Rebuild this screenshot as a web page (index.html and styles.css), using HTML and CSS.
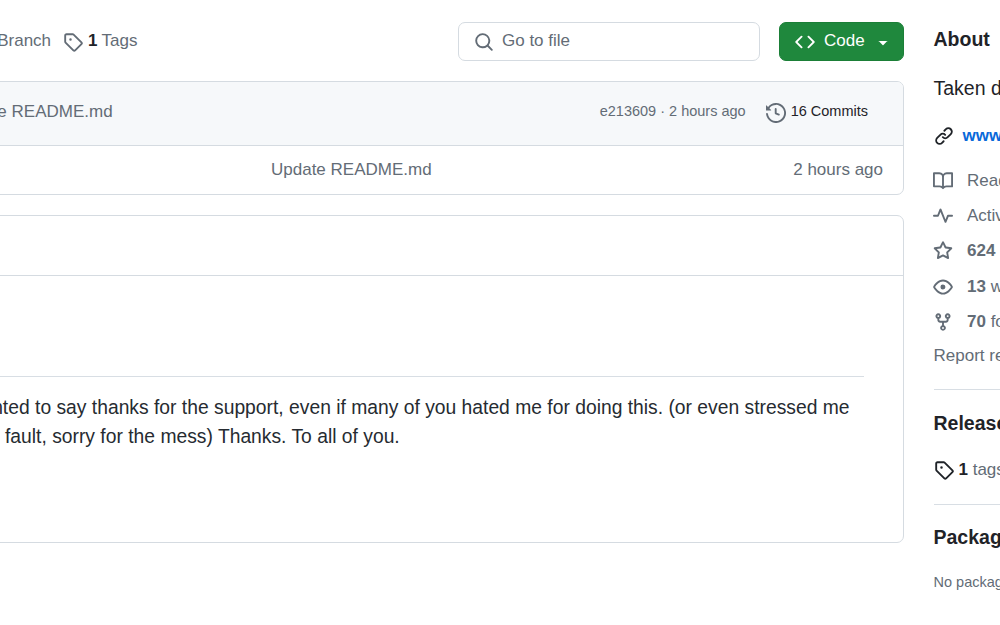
FILE: index.html
```html
<!DOCTYPE html>
<html lang="en">
<head>
<meta charset="utf-8">
<title>Repository</title>
<link rel="stylesheet" href="styles.css">
</head>
<body>
<div class="page">
  <main class="main">
    <div class="toolbar">
      <div class="refs">
        <a class="ref branch">1 Branch</a>
        <a class="ref tags">
          <svg class="icon" viewBox="0 0 16 16"><path d="M1 7.775V2.75C1 1.784 1.784 1 2.75 1h5.025c.464 0 .91.184 1.238.513l6.25 6.25a1.75 1.75 0 0 1 0 2.474l-5.026 5.026a1.75 1.75 0 0 1-2.474 0l-6.25-6.25A1.752 1.752 0 0 1 1 7.775Zm1.5 0c0 .066.026.13.073.177l6.25 6.25a.25.25 0 0 0 .354 0l5.025-5.025a.25.25 0 0 0 0-.354l-6.25-6.25a.25.25 0 0 0-.177-.073H2.75a.25.25 0 0 0-.25.25ZM6 5a1 1 0 1 1 0 2 1 1 0 0 1 0-2Z"/></svg>
          <b>1</b> Tags
        </a>
      </div>
      <div class="search">
        <svg class="icon" viewBox="0 0 16 16"><path d="M10.68 11.74a6 6 0 0 1-7.922-8.982 6 6 0 0 1 8.982 7.922l3.04 3.04a.749.749 0 0 1-.326 1.275.749.749 0 0 1-.734-.215ZM11.5 7a4.499 4.499 0 1 0-8.997 0A4.499 4.499 0 0 0 11.5 7Z"/></svg>
        <span class="lift">Go to file</span>
      </div>
      <button class="code">
        <svg class="icon" viewBox="0 0 16 16"><path d="m11.28 3.22 4.25 4.25a.75.75 0 0 1 0 1.06l-4.25 4.25a.749.749 0 0 1-1.275-.326.749.749 0 0 1 .215-.734L13.94 8l-3.72-3.72a.749.749 0 0 1 .326-1.275.749.749 0 0 1 .734.215Zm-6.56 0a.751.751 0 0 1 1.042.018.751.751 0 0 1 .018 1.042L2.06 8l3.72 3.72a.749.749 0 0 1-.326 1.275.749.749 0 0 1-.734-.215L.47 8.53a.75.75 0 0 1 0-1.06Z"/></svg>
        <span class="lift">Code</span>
        <svg class="icon caret" viewBox="0 0 16 16"><path d="m4.427 7.427 3.396 3.396a.25.25 0 0 0 .354 0l3.396-3.396A.25.25 0 0 0 11.896 7H4.104a.25.25 0 0 0-.177.427Z"/></svg>
      </button>
    </div>

    <section class="files">
      <div class="commit-head">
        <span class="commit-msg">Update README.md</span>
        <span class="commit-meta">e213609 · 2 hours ago</span>
        <a class="commits">
          <svg class="icon" viewBox="0 0 16 16"><path d="m.427 1.927 1.215 1.215a8.002 8.002 0 1 1-1.6 5.685.75.75 0 1 1 1.493-.154 6.5 6.5 0 1 0 1.18-4.458l1.358 1.358A.25.25 0 0 1 3.896 6H.25A.25.25 0 0 1 0 5.75V2.104a.25.25 0 0 1 .427-.177ZM7.75 4a.75.75 0 0 1 .75.75v2.992l2.028.812a.75.75 0 0 1-.557 1.392l-2.5-1A.751.751 0 0 1 7 8.25v-3.5A.75.75 0 0 1 7.75 4Z"/></svg>
          <span class="lift-more">16 Commits</span>
        </a>
      </div>
      <div class="file-row">
        <span class="file-msg">Update README.md</span>
        <span class="file-age">2 hours ago</span>
      </div>
    </section>

    <section class="readme">
      <div class="readme-head"></div>
      <div class="readme-body">
        <hr class="rule">
        <p class="line first">wanted to say thanks for the support, even if many of you hated me for doing this. (or even stressed me</p>
        <p class="line second">fault, sorry for the mess) Thanks. To all of you.</p>
      </div>
    </section>
  </main>

  <aside class="side">
    <h2 class="side-title">About</h2>
    <p class="desc">Taken down</p>
    <a class="site">
      <svg class="icon dark" viewBox="0 0 16 16"><path d="m7.775 3.275 1.25-1.25a3.5 3.5 0 1 1 4.95 4.95l-2.5 2.5a3.5 3.5 0 0 1-4.95 0 .751.751 0 0 1 .018-1.042.751.751 0 0 1 1.042-.018 1.998 1.998 0 0 0 2.83 0l2.5-2.5a2.002 2.002 0 0 0-2.83-2.83l-1.25 1.25a.751.751 0 0 1-1.042-.018.751.751 0 0 1-.018-1.042Zm-4.69 9.64a1.998 1.998 0 0 0 2.83 0l1.25-1.25a.751.751 0 0 1 1.042.018.751.751 0 0 1 .018 1.042l-1.25 1.25a3.5 3.5 0 1 1-4.95-4.95l2.5-2.5a3.5 3.5 0 0 1 4.95 0 .751.751 0 0 1-.018 1.042.751.751 0 0 1-1.042.018 1.998 1.998 0 0 0-2.83 0l-2.5 2.5a1.998 1.998 0 0 0 0 2.83Z"/></svg>
      <b>www</b>
    </a>
    <ul class="stats">
      <li><svg class="icon" viewBox="0 0 16 16"><path d="M0 1.75A.75.75 0 0 1 .75 1h4.253c1.227 0 2.317.59 3 1.501A3.743 3.743 0 0 1 11.006 1h4.245a.75.75 0 0 1 .75.75v10.5a.75.75 0 0 1-.75.75h-4.507a2.25 2.25 0 0 0-1.591.659l-.622.621a.75.75 0 0 1-1.06 0l-.622-.621A2.25 2.25 0 0 0 5.258 13H.75a.75.75 0 0 1-.75-.75Zm7.251 10.324.004-5.073-.002-2.253A2.25 2.25 0 0 0 5.003 2.5H1.5v9h3.757a3.75 3.75 0 0 1 1.994.574ZM8.755 4.75l-.004 7.322a3.752 3.752 0 0 1 1.992-.572H14.5v-9h-3.495a2.25 2.25 0 0 0-2.25 2.25Z"/></svg><span>Readme</span></li>
      <li><svg class="icon" viewBox="0 0 16 16"><path d="M6 2c.306 0 .582.187.696.471L10 10.731l1.304-3.26A.751.751 0 0 1 12 7h3.25a.75.75 0 0 1 0 1.5h-2.742l-1.812 4.528a.751.751 0 0 1-1.392 0L6 4.77 4.696 8.03A.75.75 0 0 1 4 8.5H.75a.75.75 0 0 1 0-1.5h2.742l1.812-4.529A.751.751 0 0 1 6 2Z"/></svg><span>Activity</span></li>
      <li><svg class="icon" viewBox="0 0 16 16"><path d="M8 .25a.75.75 0 0 1 .673.418l1.882 3.815 4.21.612a.75.75 0 0 1 .416 1.279l-3.046 2.97.719 4.192a.751.751 0 0 1-1.088.791L8 12.347l-3.766 1.98a.75.75 0 0 1-1.088-.79l.72-4.194L.818 6.374a.75.75 0 0 1 .416-1.28l4.21-.611L7.327.668A.75.75 0 0 1 8 .25Zm0 2.445L6.615 5.5a.75.75 0 0 1-.564.41l-3.097.45 2.24 2.184a.75.75 0 0 1 .216.664l-.528 3.084 2.769-1.456a.75.75 0 0 1 .698 0l2.77 1.456-.53-3.084a.75.75 0 0 1 .216-.664l2.24-2.183-3.096-.45a.75.75 0 0 1-.564-.41L8 2.694Z"/></svg><span><b>624</b> stars</span></li>
      <li><svg class="icon" viewBox="0 0 16 16"><path d="M8 2c1.981 0 3.671.992 4.933 2.078 1.27 1.091 2.187 2.345 2.637 3.023a1.62 1.62 0 0 1 0 1.798c-.45.678-1.367 1.932-2.637 3.023C11.67 13.008 9.981 14 8 14c-1.981 0-3.671-.992-4.933-2.078C1.797 10.83.88 9.576.43 8.898a1.62 1.62 0 0 1 0-1.798c.45-.677 1.367-1.931 2.637-3.022C4.33 2.992 6.019 2 8 2ZM1.679 7.932a.12.12 0 0 0 0 .136c.411.622 1.241 1.75 2.366 2.717C5.176 11.758 6.527 12.5 8 12.5c1.473 0 2.825-.742 3.955-1.715 1.124-.967 1.954-2.096 2.366-2.717a.12.12 0 0 0 0-.136c-.412-.621-1.242-1.75-2.366-2.717C10.824 4.242 9.473 3.5 8 3.5c-1.473 0-2.825.742-3.955 1.715-1.124.967-1.954 2.096-2.366 2.717ZM8 10a2 2 0 1 1-.001-3.999A2 2 0 0 1 8 10Z"/></svg><span><b>13</b> watching</span></li>
      <li><svg class="icon" viewBox="0 0 16 16"><path d="M5 5.372v.878c0 .414.336.75.75.75h4.5a.75.75 0 0 0 .75-.75v-.878a2.25 2.25 0 1 1 1.5 0v.878a2.25 2.25 0 0 1-2.25 2.25h-1.5v2.128a2.251 2.251 0 1 1-1.5 0V8.5h-1.5A2.25 2.25 0 0 1 3.5 6.25v-.878a2.25 2.25 0 1 1 1.5 0ZM5 3.25a.75.75 0 1 0-1.5 0 .75.75 0 0 0 1.5 0Zm6.75.75a.75.75 0 1 0 0-1.5.75.75 0 0 0 0 1.5Zm-3 8.75a.75.75 0 1 0-1.5 0 .75.75 0 0 0 1.5 0Z"/></svg><span><b>70</b> forks</span></li>
    </ul>
    <a class="report">Report repository</a>
    <hr class="side-rule rule-one">
    <h2 class="side-title">Releases</h2>
    <a class="rel">
      <svg class="icon dark" viewBox="0 0 16 16"><path d="M1 7.775V2.75C1 1.784 1.784 1 2.75 1h5.025c.464 0 .91.184 1.238.513l6.25 6.25a1.75 1.75 0 0 1 0 2.474l-5.026 5.026a1.75 1.75 0 0 1-2.474 0l-6.25-6.25A1.752 1.752 0 0 1 1 7.775Zm1.5 0c0 .066.026.13.073.177l6.25 6.25a.25.25 0 0 0 .354 0l5.025-5.025a.25.25 0 0 0 0-.354l-6.25-6.25a.25.25 0 0 0-.177-.073H2.75a.25.25 0 0 0-.25.25ZM6 5a1 1 0 1 1 0 2 1 1 0 0 1 0-2Z"/></svg>
      <span><b>1</b> tags</span>
    </a>
    <hr class="side-rule rule-two">
    <h2 class="side-title">Packages</h2>
    <p class="nopack">No packages published</p>
  </aside>
</div>
</body>
</html>
```

FILE: styles.css
```css
html, body {
  margin: 0;
  height: 625px;
  overflow: hidden;
  background: #fff;
}
body {
  font-family: "Liberation Sans", Arial, sans-serif;
  font-size: 17px;
  color: #1f2328;
}
.page {
  display: flex;
  width: 1400px;
  margin-left: -100px;
  align-items: flex-start;
}
.main {
  width: 1004px;
  flex: none;
  padding-top: 22px;
}
.icon {
  width: 20px;
  height: 20px;
  fill: #636c76;
  flex: none;
  display: block;
}
.icon.dark { fill: #1f2328; }
.lift { padding-bottom: 2px; }
.lift-more { padding-bottom: 3px; }

.toolbar {
  display: flex;
  align-items: center;
  height: 39px;
}
.refs {
  display: flex;
  align-items: center;
  flex: 1;
  color: #636c76;
  padding-left: 83px;
  padding-bottom: 2px;
  white-space: nowrap;
}
.ref { display: flex; align-items: center; }
.ref .icon { margin-top: 2px; }
.ref b { color: #1f2328; margin: 0 4px 0 5px; }
.tags { margin-left: 12px; }
.search {
  width: 302px;
  height: 39px;
  box-sizing: border-box;
  border: 1px solid #d5dbe1;
  border-radius: 7px;
  display: flex;
  align-items: center;
  gap: 8px;
  padding-left: 15px;
  color: #636c76;
}
.code {
  width: 125px;
  height: 39px;
  margin-left: 19px;
  background: #1f883d;
  border: 1px solid #1b7f37;
  border-radius: 7px;
  color: #fff;
  font: inherit;
  display: flex;
  align-items: center;
  padding: 0 0 0 15px;
  gap: 9px;
}
.code .icon { fill: #fff; }
.code .caret { margin-left: 0; width: 18px; height: 18px; }

.files {
  margin-top: 20px;
  border: 1px solid #d5dbe1;
  border-radius: 7px;
  height: 114px;
  box-sizing: border-box;
  overflow: hidden;
}
.commit-head {
  height: 64px;
  box-sizing: border-box;
  background: #f6f8fa;
  border-bottom: 1px solid #d5dbe1;
  display: flex;
  align-items: center;
  padding-left: 51px;
  color: #636c76;
}
.commit-msg { flex: 1; padding-bottom: 4px; }
.commit-meta { font-size: 14.5px; padding-bottom: 5px; }
.commits {
  display: flex;
  align-items: center;
  gap: 5px;
  margin-left: 20px;
  margin-right: 35px;
  margin-bottom: 2px;
  font-size: 14.5px;
  color: #1f2328;
}
.file-row {
  height: 49px;
  display: flex;
  align-items: center;
  padding-left: 370px;
  padding-right: 20px;
  color: #636c76;
}
.file-msg { flex: 1; padding-bottom: 2px; }
.file-age { padding-bottom: 2px; }

.readme {
  margin-top: 20px;
  height: 328px;
  box-sizing: border-box;
  border: 1px solid #d5dbe1;
  border-radius: 7px;
}
.readme-head {
  height: 59px;
  border-bottom: 1px solid #d5dbe1;
}
.readme-body {
  padding-right: 39px;
}
.rule {
  margin: 100px 0 0;
  border: 0;
  border-top: 1px solid #d8dee4;
}
.line {
  margin: 0;
  font-size: 19.3px;
  line-height: 29px;
  white-space: nowrap;
  color: #262b31;
}
.first { padding-top: 16px; padding-left: 66.5px; }
.second { padding-left: 104px; }

.side {
  margin-left: 29.5px;
  width: 300px;
  flex: none;
  white-space: nowrap;
  color: #636c76;
}
.side-title {
  margin: 0;
  font-size: 19.5px;
  line-height: 26px;
  font-weight: 700;
  color: #1f2328;
}
.side > .side-title:first-child { margin-top: 26px; }
.desc {
  margin: 24px 0 0;
  font-size: 19.5px;
  line-height: 24px;
  color: #1f2328;
}
.site {
  display: flex;
  align-items: center;
  gap: 9px;
  margin-top: 26px;
  height: 20px;
  color: #0969da;
}
.stats {
  list-style: none;
  margin: 17px 0 0;
  padding: 0;
}
.stats li {
  display: flex;
  align-items: center;
  height: 35.4px;
  gap: 14px;
}
.stats .icon { margin-left: -1px; margin-right: 0.5px; }
.stats b { color: #636c76; }
.report { display: block; margin-top: 1px; line-height: 30px; }
.side-rule {
  border: 0;
  border-top: 1px solid #d8dee4;
  margin: 0;
}
.rule-one { margin-top: 18px; margin-bottom: 20px; }
.rel {
  display: flex;
  align-items: center;
  gap: 5px;
  margin-top: 24px;
  height: 20px;
}
.rel b { color: #1f2328; }
.rule-two { margin-top: 24px; margin-bottom: 19px; }
.nopack { margin: 24px 0 0; font-size: 14.5px; }
```
